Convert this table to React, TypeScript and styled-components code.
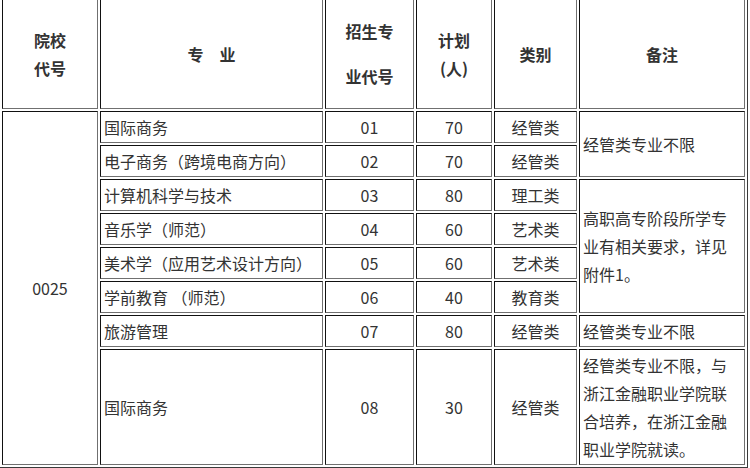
import React, { FC } from 'react';
import styled, { createGlobalStyle } from 'styled-components';

const GlobalStyle = createGlobalStyle`
  html, body {
    margin: 0;
    padding: 0;
    background: #fff;
  }
  body {
    font-family: "Microsoft YaHei", "Noto Sans CJK SC", sans-serif;
    color: #333;
    overflow: hidden;
  }
`;

interface Major {
  name: string;
  code: string;
  plan: number;
  kind: string;
  note?: { text: string; span: number };
}

const MAJORS: Major[] = [
  { name: '国际商务', code: '01', plan: 70, kind: '经管类', note: { text: '经管类专业不限', span: 2 } },
  { name: '电子商务（跨境电商方向）', code: '02', plan: 70, kind: '经管类' },
  {
    name: '计算机科学与技术',
    code: '03',
    plan: 80,
    kind: '理工类',
    note: { text: '高职高专阶段所学专业有相关要求，详见附件1。', span: 4 },
  },
  { name: '音乐学（师范）', code: '04', plan: 60, kind: '艺术类' },
  { name: '美术学（应用艺术设计方向）', code: '05', plan: 60, kind: '艺术类' },
  { name: '学前教育 （师范）', code: '06', plan: 40, kind: '教育类' },
  { name: '旅游管理', code: '07', plan: 80, kind: '经管类', note: { text: '经管类专业不限', span: 1 } },
  {
    name: '国际商务',
    code: '08',
    plan: 30,
    kind: '经管类',
    note: { text: '经管类专业不限，与浙江金融职业学院联合培养，在浙江金融职业学院就读。', span: 1 },
  },
];

const App: FC = () => {
  return (
    <>
      <GlobalStyle />
      <Table>
        <thead>
          <tr>
            <Th $w={96}>
              院校
              <br />
              代号
            </Th>
            <Th $w={223}>专　业</Th>
            <Th $w={89}>
              <WideLines>
                招生专
                <br />
                业代号
              </WideLines>
            </Th>
            <Th $w={76}>
              计划
              <br />
              (人)
            </Th>
            <Th $w={83}>类别</Th>
            <Th $w={166}>备注</Th>
          </tr>
        </thead>
        <tbody>
          {MAJORS.map((m, i) => (
            <tr key={m.code}>
              {i === 0 && (
                <Td $align="center" rowSpan={MAJORS.length}>
                  0025
                </Td>
              )}
              <Td>{m.name}</Td>
              <Td $align="center">{m.code}</Td>
              <Td $align="center">{m.plan}</Td>
              <Td $align="center">{m.kind}</Td>
              {m.note && (
                <Td rowSpan={m.note.span}>{m.note.text}</Td>
              )}
            </tr>
          ))}
        </tbody>
      </Table>
    </>
  );
};

export default App;

const Table = styled.table`
  box-sizing: border-box;
  width: 749px;
  margin: -4px 0 0 -1px;
  table-layout: fixed;
  border-collapse: separate;
  border-spacing: 2px;
  border: 1px solid;
  border-color: #c8c8c8 #3a3a3a #3a3a3a #c8c8c8;
  font-size: 16px;
  line-height: 28px;
`;

const cellBorder = `
  border: 1px solid;
  border-color: #111 #707070 #707070 #111;
`;

const Th = styled.th<{ $w: number }>`
  box-sizing: border-box;
  width: ${(p) => p.$w}px;
  height: 110px;
  padding: 1px 3px;
  ${cellBorder}
  font-weight: bold;
  text-align: center;
  vertical-align: middle;
  color: #333;
`;

const WideLines = styled.div`
  line-height: 45px;
`;

const Td = styled.td<{ $align?: 'left' | 'center' }>`
  padding: 1px 3px;
  ${cellBorder}
  text-align: ${(p) => p.$align ?? 'left'};
  vertical-align: middle;
  color: #333;
  word-break: break-all;
`;
